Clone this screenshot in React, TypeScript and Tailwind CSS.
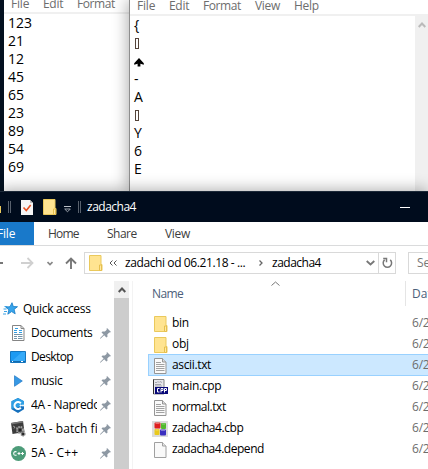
import type { ReactNode } from "react";

const numbers = ["123", "21", "12", "45", "65", "23", "89", "54", "69"];
const symbols = ["{", "box", "arrow", "-", "A", "box", "Y", "6", "E"];

function Folder({ className = "" }: { className?: string }) {
  return (
    <svg width="14" height="16" viewBox="0 0 14 16" className={`shrink-0 ${className}`}>
      <path d="M.5 .5h11.500v9h1v6H.5z" fill="#ffe491" stroke="#eac95c" />
      <path d="M10.500 15.500v-5.500h2v5.500z" fill="#ffe9a2" stroke="#e6bf4e" />
    </svg>
  );
}

function TextDoc() {
  return (
    <svg width="13" height="16" viewBox="0 0 13 16" className="shrink-0">
      <path d="M.5 .5h8l3.500 3.500v11.500H.5z" fill="#fafafa" stroke="#959595" />
      <path d="M8.500 .5v3.500h3.500" fill="#ddd" stroke="#959595" />
      <path d="M2 4.500h5M2 6.500h8.500M2 8.500h8.500M2 10.500h8.500M2 12.500h8.500" stroke="#a2a2a2" />
    </svg>
  );
}

function BlankDoc() {
  return (
    <svg width="13" height="16" viewBox="0 0 13 16" className="shrink-0">
      <path d="M.5 .5h8l3.500 3.500v11.500H.5z" fill="#f9f9f9" stroke="#a0a0a0" />
      <path d="M8.500 .5v3.500h3.500" fill="#e6e6e6" stroke="#a0a0a0" />
    </svg>
  );
}

function CppDoc() {
  return (
    <svg width="16" height="16" viewBox="0 0 16 16" className="-ml-0.5 shrink-0">
      <path d="M1.500 .5h10.500v14.500H1.500z" fill="#e6e6ea" stroke="#888" />
      <path d="M3 3.500h2l1-1 1 1 1-1 2 1M3 5.500h6M3 7h7" fill="none" stroke="#a5a5ad" />
      <path d="M1.500 .5v14.500" stroke="#333" />
      <rect x="3" y="8" width="13" height="7" fill="#080878" />
      <path d="M7.500 9.500H5.500v3.500h2M9 13.500v-4h2v2H9M12.500 13.500v-4h2v2h-2" fill="none" stroke="#fff" />
    </svg>
  );
}

function BlocksIcon() {
  return (
    <svg width="16" height="16" viewBox="0 0 16 16" className="-ml-0.5 shrink-0">
      <rect width="16" height="16" fill="#dcdcdc" />
      <rect x="2.500" y="1.500" width="6" height="6" rx="1" fill="#df2020" />
      <rect x="9" y="2" width="5" height="6" rx="1" fill="#51b92c" />
      <rect x="2.500" y="8" width="5" height="6" rx="1" fill="#e9c91c" />
      <rect x="8" y="8.500" width="6" height="6" rx="1" fill="#3a2fc0" />
      <path d="M3.500 2.500h4M10 3h3M3.500 9h3M9 9.500h4" stroke="#fff" opacity=".35" />
    </svg>
  );
}

function Pin() {
  return (
    <svg width="11" height="11" viewBox="0 0 11 11" className="shrink-0">
      <path d="M7 0l4 4-1.200.6-.6-.2-1.900 2 .2 2.300L6.300 9.500 4.200 7.300.7 10.600 0 10.700l.2-.8 3.400-3.300L1.500 4.500l1-1.100 2.400.2 1.900-1.800L6.500 1z" fill="#8d98a3" />
    </svg>
  );
}

function QuickStar() {
  return (
    <svg width="15" height="14" viewBox="0 0 15 14" className="shrink-0">
      <path d="M9 .7l1.300 3.800 4.200.2-3.400 2.700 1.100 4.400-3.600-2.200-3.800 2.600 1.100-4.400-3.200-2.700 4.300-.4z" fill="#38a5ec" stroke="#147ac4" strokeWidth=".8" />
      <path d="M1.500 4.500h3M.5 7h3M1 9.500h3M0 12h3" stroke="#3ba2e4" />
    </svg>
  );
}

function DocumentsIcon() {
  return (
    <svg width="13" height="16" viewBox="0 0 13 16" className="shrink-0">
      <path d="M.5 .5h8.500l3 3v12H.5z" fill="#fff" stroke="#858585" />
      <path d="M9 .5v3h3" fill="none" stroke="#858585" />
      <path d="M2 5.500h3M2 7.500h3M7 5.500h3M7 7.500h3M3 3.500h3" stroke="#2f9de4" />
      <path d="M2 9.500h8.500M2 11.500h3M6 11.500h4.500M2 13.500h3M6 13.500h4.500" stroke="#7393a9" />
    </svg>
  );
}

function DesktopIcon() {
  return (
    <svg width="16" height="12" viewBox="0 0 16 12" className="shrink-0">
      <path d="M.5 .5h15v11H.5z" fill="#1d9af2" stroke="#1475be" />
      <path d="M1 11L12 1h3v9z" fill="#44b2fb" opacity=".65" />
      <path d="M1 10.500h14" stroke="#126bae" />
      <path d="M2 10.500h1M11 10.500h2" stroke="#fff" />
    </svg>
  );
}

function CHexIcon() {
  return (
    <svg width="14" height="15" viewBox="0 0 14 15" className="shrink-0">
      <path d="M7 0l6 3.300v8L7 15l-6.500-3.700v-8z" fill="#1570bd" />
      <path d="M7 0l6 3.300v4.200L.5 11V3.300z" fill="#2f9fe4" />
      <path d="M9.800 5.400A3.500 3.500 0 1 0 9.800 9.600" fill="none" stroke="#fff" strokeWidth="2" />
      <path d="M8.500 7.500h4.500M9.700 6.300v2.400M12 6.300v2.400" stroke="#fff" strokeWidth=".8" />
    </svg>
  );
}

function BatchIcon() {
  return (
    <svg width="15" height="16" viewBox="0 0 15 16" className="shrink-0">
      <path d="M0 2l12-2 1.500 11L1.500 13z" fill="#3c3c3c" />
      <path d="M0 2l12-2 .2 1.500-12 2z" fill="#777" />
      <path d="M2 5l2 1-1 1.500M5 7h2" fill="none" stroke="#bbb" strokeWidth=".7" />
      <circle cx="9" cy="9" r="3" fill="#444" stroke="#a3a3a3" strokeWidth="2" strokeDasharray="1.600 .8" />
      <circle cx="12" cy="13" r="1.800" fill="#222" stroke="#888" strokeWidth="1.500" strokeDasharray="1.200 .6" />
      <circle cx="9" cy="9" r="1.200" fill="#222" />
    </svg>
  );
}

function CppBadge() {
  return (
    <svg width="15" height="15" viewBox="0 0 15 15" className="shrink-0">
      <circle cx="7.500" cy="7.500" r="7.500" fill="#4d9c79" />
      <path d="M5.500 6Q4.700 5.300 3.600 5.800Q2.500 6.500 2.700 8Q3 9.300 4.200 9.300Q5 9.300 5.500 8.800" fill="none" stroke="#fff" strokeWidth="1.100" />
      <path d="M6.500 7.500h3M8 6v3M10 7.500h3M11.500 6v3" stroke="#fff" />
    </svg>
  );
}

const quick = [
  { label: "Documents", icon: <DocumentsIcon />, track: "tracking-[-0.3px]" },
  { label: "Desktop", icon: <DesktopIcon />, track: "tracking-[-0.6px]" },
  { label: "music", icon: (
    <svg width="9" height="12" viewBox="0 0 9 12"><path d="M.5 .7v10.600L8.300 6z" fill="#3698e4" stroke="#1f78c7" strokeWidth=".7" /></svg>
  ), track: "tracking-[-0.3px]" },
  { label: "4A - Napredok", icon: <CHexIcon />, track: "tracking-[-0.4px]" },
  { label: "3A - batch files", icon: <BatchIcon />, track: "tracking-[0.05px]" },
  { label: "5A - C++", icon: <CppBadge />, track: "tracking-[0.2px]" },
];

const files = [
  { label: "bin", icon: <Folder />, track: "tracking-[-0.3px]" },
  { label: "obj", icon: <Folder />, track: "tracking-[-0.3px]" },
  { label: "ascii.txt", icon: <TextDoc />, track: "tracking-[-0.35px]" },
  { label: "main.cpp", icon: <CppDoc />, track: "tracking-[-0.3px]" },
  { label: "normal.txt", icon: <TextDoc />, track: "tracking-[-0.45px]" },
  { label: "zadacha4.cbp", icon: <BlocksIcon />, track: "tracking-[-0.43px]" },
  { label: "zadacha4.depend", icon: <BlankDoc />, track: "tracking-[-0.47px]" },
];

function Word({ w, children, className = "" }: { w: string; children: ReactNode; className?: string }) {
  return <span className={`${w} shrink-0 whitespace-nowrap ${className}`}>{children}</span>;
}

function Glyph({ s }: { s: string }) {
  if (s === "box") return <span className="ml-px h-[11px] w-1 border border-[#54443a]" />;
  if (s === "arrow")
    return (
      <svg width="10" height="9" viewBox="0 0 10 9" className="mt-0.5"><path d="M5 0L9.800 5.200V6.800L6.400 5.800V8.500H3.600V5.800L.2 6.800V5.200z" fill="#000" /></svg>
    );
  return <>{s}</>;
}

export default function App() {
  return (
    <div className="relative h-[469px] w-[428px] overflow-hidden bg-[#03101f] font-['Open_Sans','Noto_Sans',sans-serif] text-[12px] leading-4 text-black">
      <section className="absolute left-1 top-0 h-[191px] w-[126px] bg-white">
        <div className="flex h-3.5 items-end border-b-2 border-[#f0f0f0] pl-[7px] text-[#6d6d6d]">
          <Word w="w-8" className="tracking-[-0.2px]">File</Word>
          <Word w="w-[34px]" className="tracking-[-0.3px]">Edit</Word>
          <Word w="w-12" className="tracking-[-0.4px]">Format</Word>
        </div>
        <div className="pl-1 text-[14px] leading-[18px]">
          {numbers.map((n) => <div key={n} className="h-[18px]">{n}</div>)}
        </div>
      </section>

      <section className="absolute left-[129px] top-0 h-[191px] w-[299px] border-l border-[#8e8e8e] bg-white shadow-[-2px_0_14px_rgba(0,0,0,0.3)]">
        <div className="flex h-4 items-end border-b-2 border-[#f0f0f0] pl-[7px] text-[#6d6d6d]">
          <Word w="w-8" className="tracking-[-0.2px]">File</Word>
          <Word w="w-[34px]" className="tracking-[-0.3px]">Edit</Word>
          <Word w="w-[52px]" className="tracking-[-0.4px]">Format</Word>
          <Word w="w-[39px]" className="tracking-[-0.3px]">View</Word>
          <Word w="w-8" className="tracking-[-0.3px]">Help</Word>
        </div>
        <div className="flex h-[175px]">
          <div className="flex-1 pl-1 text-[14px] leading-[18px]">
            {symbols.map((s, i) => <div key={i} className="flex h-[18px] items-center"><Glyph s={s} /></div>)}
          </div>
          <div className="flex w-[13px] justify-center bg-[#f0f0f0] pt-1.5">
            <svg width="8" height="6" viewBox="0 0 8 6"><path d="M.7 5L4 1.500 7.300 5" fill="none" stroke="#bababa" strokeWidth="2" /></svg>
          </div>
        </div>
      </section>

      <section className="absolute left-0 top-[191px] h-[278px] w-[428px] bg-white shadow-[0_-2px_14px_rgba(0,0,0,0.3)]">
        <header className="flex h-[31px] items-center border-t border-[#1c2938] bg-[#000c1d] text-white">
          <span className="mt-1 h-[7px] w-px bg-[#eac95c]" />
          <span className="ml-[7px] h-3 w-[3px] border-x border-[#58616d]" />
          <svg width="12" height="15" viewBox="0 0 12 15" className="ml-2.5">
            <path d="M0 0h9l3 3v12H0z" fill="#f5f5f5" /><path d="M9 0v3h3" fill="#bcbcbc" />
            <path d="M2.500 7.500l2.800 3L9.700 5" fill="none" stroke="#e65022" strokeWidth="1.600" />
          </svg>
          <Folder className="ml-2.5" />
          <svg width="7" height="7" viewBox="0 0 7 7" className="ml-[7px] mt-1"><path d="M0 .5h7" stroke="#bcc1c7" /><path d="M.7 3L3.500 5.800 6.300 3z" fill="none" stroke="#9ca4ad" /></svg>
          <span className="ml-[7px] h-3 w-[3px] border-x border-[#58616d]" />
          <span className="ml-[6px] flex-1 tracking-[-0.5px]">zadacha4</span>
          <span className="mr-[18px] h-px w-2.5 bg-white" />
        </header>
        <nav className="flex h-6 border-b border-[#dadbdc] leading-[24px] text-[#3d3d3d]">
          <div className="flex h-[23px] w-[34px] bg-[#1979ca] text-white"><span className="-ml-[3px] tracking-[-0.2px]">File</span></div>
          <Word w="w-[59px]" className="ml-3.5 tracking-[-0.8px]">Home</Word>
          <Word w="w-[58px]" className="tracking-[-0.5px]">Share</Word>
          <Word w="w-10" className="tracking-[-0.3px]">View</Word>
        </nav>
        <div className="mb-px flex h-[34px] items-center text-black">
          <span className="h-0.5 w-[3px] shrink-0 bg-[#777]" />
          <svg width="13" height="12" viewBox="0 0 13 12" className="ml-[18px] shrink-0"><path d="M0 6h11M6.500 1l5 5-5 5" fill="none" stroke="#d0d0d0" strokeWidth="1.800" /></svg>
          <svg width="6" height="5" viewBox="0 0 6 5" className="ml-[13px] shrink-0"><path d="M.5 1L3 3.500 5.500 1" fill="none" stroke="#888" strokeWidth="1.700" /></svg>
          <svg width="12" height="12" viewBox="0 0 12 12" className="ml-3 shrink-0"><path d="M6 12V1.500M1 6.500l5-5 5 5" fill="none" stroke="#777" strokeWidth="1.900" /></svg>
          <div className="ml-[7px] flex h-[22px] w-[312px] shrink-0 items-center border border-[#d9d9d9]">
            <div className="flex h-full flex-1 items-center pl-1">
              <Folder />
              <svg width="8" height="6" viewBox="0 0 8 6" className="ml-1.5 shrink-0"><path d="M3.500 .5L1 3l2.500 2.500M7.500 .5L5 3l2.500 2.500" fill="none" stroke="#555" /></svg>
              <Word w="w-[134px]" className="ml-2 tracking-[-0.4px]">zadachi od 06.21.18 - ...</Word>
              <svg width="4" height="6" viewBox="0 0 4 6" className="shrink-0"><path d="M.5 .5L3 3 .5 5.500" fill="none" stroke="#666" strokeWidth="1.300" /></svg>
              <Word w="w-[94px]" className="ml-[9px] tracking-[-0.5px]">zadacha4</Word>
              <svg width="9" height="6" viewBox="0 0 9 6" className="shrink-0"><path d="M.7 1L4.500 4.500 8.300 1" fill="none" stroke="#777" strokeWidth="1.800" /></svg>
            </div>
            <div className="flex h-full w-[17px] shrink-0 items-center justify-center border-l border-[#d9d9d9]">
              <svg width="11" height="12" viewBox="0 0 11 12"><path d="M2.600 2.900A4.200 4.200 0 1 0 8.200 2.900M1.200 1.500h3.300v3.800" fill="none" stroke="#777" strokeWidth="1.500" /></svg>
            </div>
          </div>
          <div className="ml-3 h-[22px] w-5 shrink-0 overflow-hidden border border-r-0 border-[#d9d9d9] pl-2 leading-5 text-[#777]">Search</div>
        </div>
        <div className="flex h-[188px]">
          <aside className="flex w-[133px] border-r border-[#f3f3f3]">
            <div className="w-[114px] pt-4">
              <div className="flex h-6 items-center pl-[3px]"><QuickStar /><span className="ml-[5px] tracking-[-0.3px]">Quick access</span></div>
              {quick.map((q) => (
                <div key={q.label} className="flex h-6 items-center">
                  <span className="ml-2.5 flex w-4 shrink-0 justify-center">{q.icon}</span>
                  <span className={`ml-[5px] w-[66px] shrink-0 overflow-hidden whitespace-nowrap ${q.track}`}>{q.label}</span>
                  <span className="ml-[3px]"><Pin /></span>
                </div>
              ))}
            </div>
            <div className="w-[15px] bg-[#cdcdcd]">
              <div className="flex h-[17px] items-center justify-center bg-[#f0f0f0]">
                <svg width="8" height="6" viewBox="0 0 8 6"><path d="M.7 5L4 1.500 7.300 5" fill="none" stroke="#555" strokeWidth="2" /></svg>
              </div>
            </div>
          </aside>
          <main className="flex-1">
            <div className="flex h-[26px] items-center text-[#4c607a]">
              <Word w="w-[119px]" className="ml-[19px] tracking-[-0.6px]">Name</Word>
              <svg width="9" height="5" viewBox="0 0 9 5" className="self-start"><path d="M.5 4.500l4-3.500 4 3.500" fill="none" stroke="#777" /></svg>
              <div className="ml-auto h-[25px] w-[23px] self-start overflow-hidden border-l border-[#e5e5e5] pl-1.5 leading-[26px]">Date</div>
            </div>
            <div className="pt-[6px]">
              {files.map((f) => (
                <div key={f.label} className={`ml-[15px] flex h-[21px] items-center pl-[5px] ${f.label === "ascii.txt" ? "bg-[#cce8ff] shadow-[inset_1px_0_#99d1ff,0_-1px_#99d1ff,inset_0_-1px_#99d1ff]" : ""}`}>
                  <span className="flex w-[19px] shrink-0 pl-px">{f.icon}</span>
                  <span className={`w-[240px] shrink-0 whitespace-nowrap pb-0.5 ${f.track}`}>{f.label}</span>
                  <span className="w-4 overflow-hidden whitespace-nowrap pb-0.5 tracking-[-0.2px] text-[#6d6d6d]">6/21/2018</span>
                </div>
              ))}
            </div>
          </main>
        </div>
      </section>
    </div>
  );
}
